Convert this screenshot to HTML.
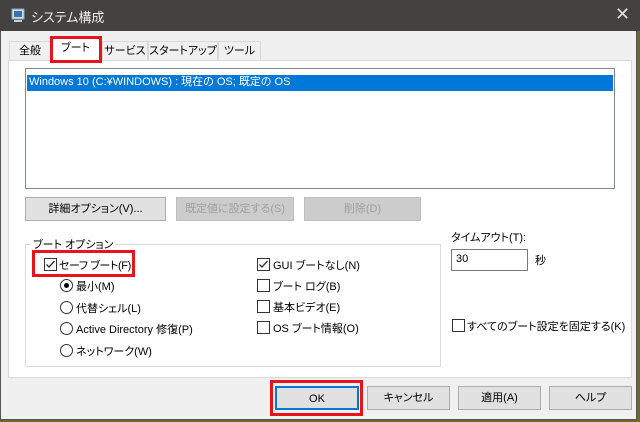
<!DOCTYPE html>
<html><head><meta charset="utf-8"><style>
*{box-sizing:border-box;margin:0;padding:0}
body{width:640px;height:422px;background:#6b6a2a;position:relative;overflow:hidden;font-family:"Liberation Sans","Noto Sans CJK JP",sans-serif;font-size:11px;font-feature-settings:"palt";color:#000}
.a{position:absolute;white-space:nowrap}
#win{position:absolute;left:0;top:0;width:637px;height:420px;background:#f0f0f0;border:1px solid #555}
#title{position:absolute;left:0;top:0;width:640px;height:31px;background:#444241;color:#fff}
.btn{position:absolute;height:24px;background:#e1e1e1;border:1px solid #adadad;text-align:center;line-height:22px}
.dis{color:#a0a0a0;background:#ccc;border-color:#bfbfbf}
.cb{position:absolute;width:13px;height:13px;border:1px solid #333;background:#fff}
.rb{position:absolute;width:13px;height:13px;border:1px solid #333;border-radius:50%;background:#fff}
.red{position:absolute;border:3px solid #e8141c}
.tab{position:absolute;top:41px;height:20px;border:1px solid #d9d9d9;border-bottom:none;background:#f0f0f0;text-align:center;line-height:18px;white-space:nowrap}
</style></head><body>
<div id="win"></div>
<div id="title">
 <svg class="a" style="left:10px;top:8px" width="16" height="16"><rect x="2" y="1" width="12" height="10" fill="#cfe0f0" stroke="#8aa" /><rect x="4" y="3" width="8" height="6" fill="#3b6fb0"/><rect x="4" y="12" width="8" height="2" fill="#ccc"/></svg>
 <span class="a" style="left:31px;top:7px;font-size:13px;color:#eee">システム構成</span>
 <span class="a" style="left:615px;top:4px;font-size:18px;color:#ddd;font-weight:300">✕</span>
</div>
<div class="tab" style="left:9px;width:42px">全般</div>
<div class="tab" style="left:102px;width:46px">サービス</div>
<div class="tab" style="left:148px;width:70px">スタートアップ</div>
<div class="tab" style="left:218px;width:43px">ツール</div>
<div class="a" style="left:8px;top:60px;width:624px;height:318px;background:#fff;border:1px solid #d9d9d9"></div>
<div class="tab" style="left:52px;top:39px;height:23px;width:47px;background:#fff;border:none">ブート</div>
<div class="red" style="left:50px;top:36px;width:52px;height:27px"></div>
<div class="a" style="left:25px;top:68px;width:590px;height:121px;border:1px solid #828790;background:#fff"></div>
<div class="a" style="left:27px;top:75px;width:586px;height:16px;background:#0078d7;color:#fff;line-height:15px;padding-left:2px">Windows 10 (C:¥WINDOWS) : 現在の OS; 既定の OS</div>
<div class="btn" style="left:25px;top:197px;width:141px">詳細オプション(V)...</div>
<div class="btn dis" style="left:176px;top:197px;width:118px">既定値に設定する(S)</div>
<div class="btn dis" style="left:304px;top:197px;width:117px">削除(D)</div>
<div class="a" style="left:25px;top:244px;width:416px;height:123px;border:1px solid #dcdcdc"></div>
<span class="a" style="left:31px;top:236px;background:#fff;padding:0 2px">ブート オプション</span>
<svg class="a" style="left:44px;top:258px" width="13" height="13"><rect x="0.5" y="0.5" width="12" height="12" fill="#fff" stroke="#333"/><path d="M2.5 6.5 L5 9 L10.5 3" fill="none" stroke="#333" stroke-width="1.3"/></svg>
<span class="a" style="left:59px;top:257px;letter-spacing:-0.4px">セーフ ブート(F)</span>
<div class="red" style="left:32px;top:250px;width:103px;height:27px"></div>
<div class="rb" style="left:60px;top:279px"></div><div class="a" style="left:64px;top:283px;width:5px;height:5px;border-radius:50%;background:#000"></div>
<span class="a" style="left:76px;top:278px">最小(M)</span>
<div class="rb" style="left:60px;top:301px"></div><span class="a" style="left:76px;top:300px">代替シェル(L)</span>
<div class="rb" style="left:60px;top:322px"></div><span class="a" style="left:76px;top:321px">Active Directory 修復(P)</span>
<div class="rb" style="left:60px;top:344px"></div><span class="a" style="left:76px;top:343px">ネットワーク(W)</span>
<svg class="a" style="left:257px;top:258px" width="13" height="13"><rect x="0.5" y="0.5" width="12" height="12" fill="#fff" stroke="#333"/><path d="M2.5 6.5 L5 9 L10.5 3" fill="none" stroke="#333" stroke-width="1.3"/></svg>
<span class="a" style="left:273px;top:257px">GUI ブートなし(N)</span>
<div class="cb" style="left:257px;top:279px"></div><span class="a" style="left:273px;top:278px">ブート ログ(B)</span>
<div class="cb" style="left:257px;top:300px"></div><span class="a" style="left:273px;top:299px">基本ビデオ(E)</span>
<div class="cb" style="left:257px;top:321px"></div><span class="a" style="left:273px;top:320px">OS ブート情報(O)</span>
<span class="a" style="left:451px;top:229px">タイムアウト(T):</span>
<div class="a" style="left:451px;top:249px;width:77px;height:22px;border:1px solid #7a7a7a;background:#fff;padding:3px 4px">30</div>
<span class="a" style="left:535px;top:252px">秒</span>
<div class="cb" style="left:452px;top:319px"></div><span class="a" style="left:467px;top:318px">すべてのブート設定を固定する(K)</span>
<div class="btn" style="left:275px;top:386px;width:84px;border:2px solid #0078d7">OK</div>
<div class="red" style="left:270px;top:380px;width:93px;height:36px"></div>
<div class="btn" style="left:367px;top:386px;width:83px">キャンセル</div>
<div class="btn" style="left:458px;top:386px;width:83px">適用(A)</div>
<div class="btn" style="left:549px;top:386px;width:83px">ヘルプ</div>
</body></html>
